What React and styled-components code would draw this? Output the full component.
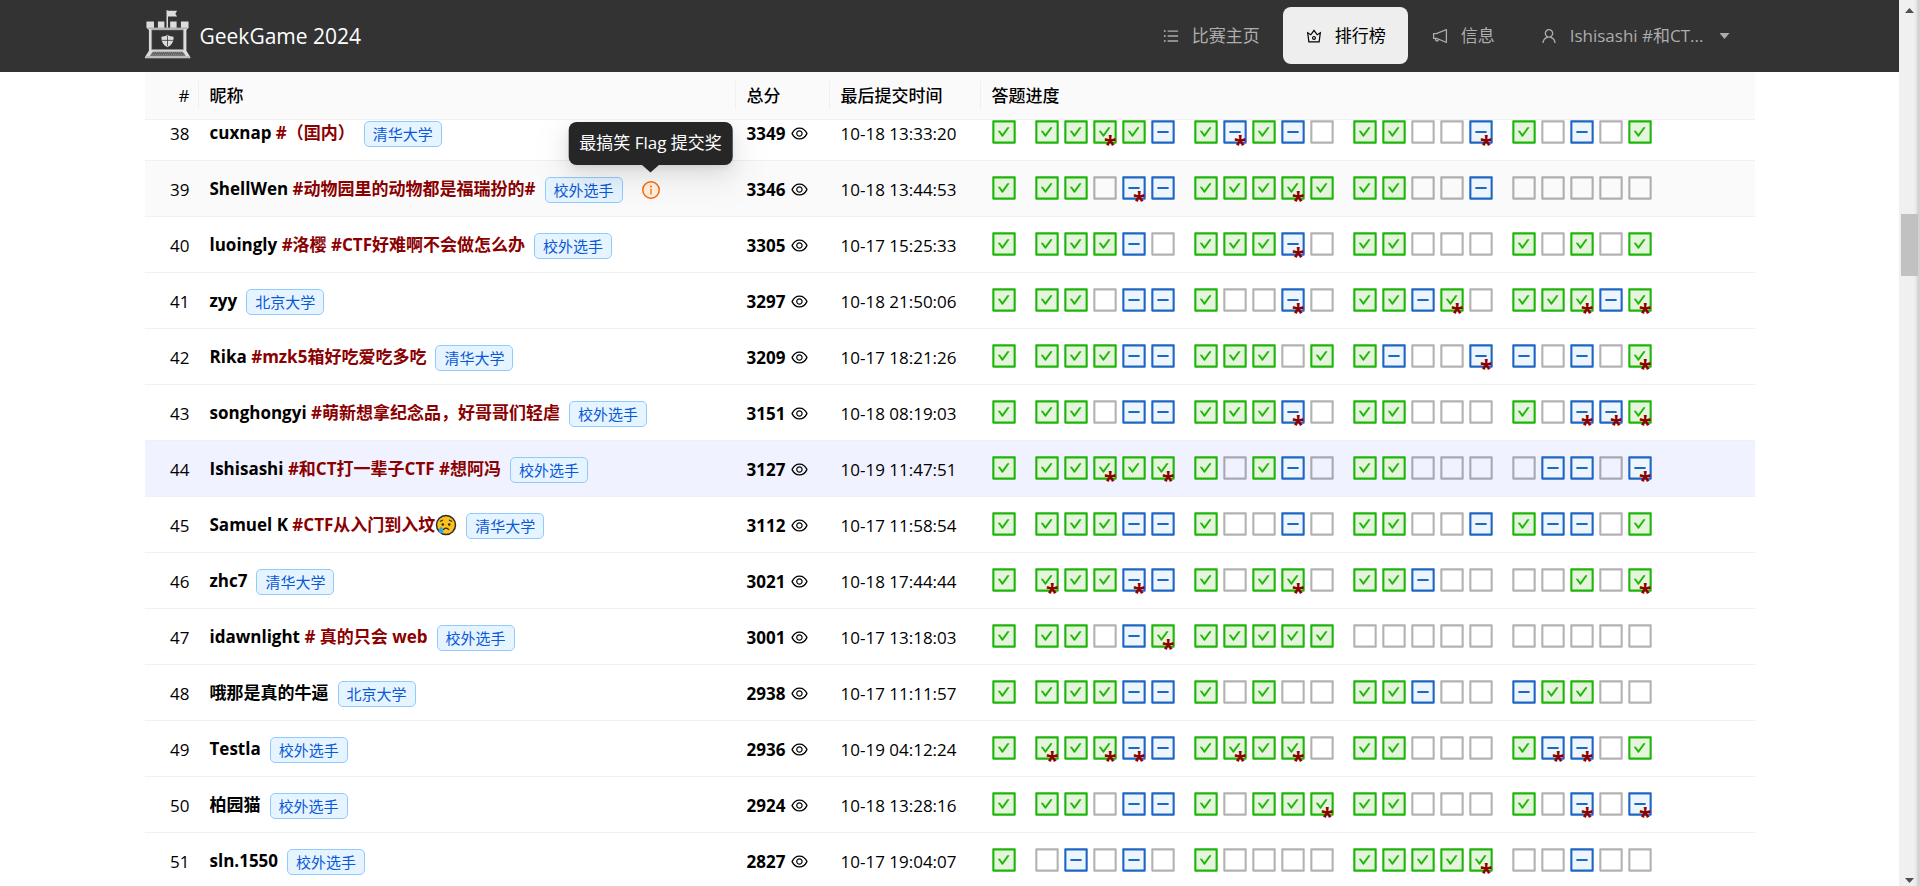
import React, { useLayoutEffect, useRef } from "react";
import styled, { createGlobalStyle, css } from "styled-components";
import {
  AiOutlineCrown,
  AiOutlineEye,
  AiOutlineNotification,
  AiOutlineUnorderedList,
  AiOutlineUser,
} from "react-icons/ai";

const GlobalStyle = createGlobalStyle`
  *, *::before, *::after { box-sizing: border-box; }
  body {
    margin: 0;
    background: #fff;
    color: #000;
    font-family: "Open Sans", "Noto Sans CJK SC", sans-serif;
    font-size: 17px;
    line-height: 26px;
  }
`;

const Shell = styled.div`
  display: grid;
  grid-template-columns: minmax(0, 1fr) 21px;
  height: 100vh;
`;

const Scroller = styled.div`
  overflow-x: hidden;
  overflow-y: auto;
  scrollbar-width: none;
`;

const Container = styled.div`
  max-width: 1610px;
  margin: 0 auto;
`;

/* ---------- top bar ---------- */

const TopBar = styled.header`
  position: sticky;
  top: 0;
  z-index: 10;
  background: #333;
`;

const TopBarInner = styled(Container)`
  display: flex;
  align-items: center;
  justify-content: space-between;
  height: 72px;
`;

const Brand = styled.a`
  display: flex;
  align-items: center;
  gap: 9px;
  color: #fff;
  font-size: 21px;
  text-decoration: none;
`;

const Logo = styled.svg`
  display: block;
  width: 46px;
  height: 49px;
  margin-bottom: 4px;
`;

const Nav = styled.nav`
  display: flex;
  gap: 1px;
  padding: 0 3px 2px 0;
`;

const navItem = css`
  display: flex;
  align-items: center;
  gap: 12px;
  height: 57px;
  padding: 2px 22px 0;
  border: 0;
  border-radius: 8px;
  background: ${(p) => (p.$active ? "#eee" : "transparent")};
  color: ${(p) => (p.$active ? "#000" : "#adadad")};
  font: inherit;
  text-decoration: none;
  white-space: nowrap;
  cursor: pointer;

  svg {
    width: 18px;
    height: 18px;
  }
`;

const NavLink = styled.a`
  ${navItem}
`;

const AccountButton = styled.button`
  ${navItem}
`;

const Caret = styled.span`
  width: 10px;
  height: 6px;
  margin-left: 4px;
  background: currentColor;
  clip-path: polygon(0 0, 100% 0, 50% 100%);
`;

/* ---------- table ---------- */

const Board = styled.table`
  width: 100%;
  table-layout: fixed;
  border-collapse: separate;
  border-spacing: 0;
`;

const Col = styled.col`
  width: ${(p) => (p.$w ? `${p.$w}px` : "auto")};
`;

const HeadCell = styled.th`
  position: sticky;
  top: 72px;
  z-index: 2;
  height: 48px;
  padding: 0 9px 0 11px;
  border-bottom: 1px solid #f0f0f0;
  background: #fafafa;
  font-weight: 500;
  text-align: ${(p) => p.$align || "left"};

  &:not(:last-child)::after {
    content: "";
    position: absolute;
    top: 9px;
    right: 0;
    width: 1px;
    height: 28px;
    background: #f0f0f0;
  }
`;

const rowTint = { hover: "#fafafa", mine: "#f0f2ff" };

const Row = styled.tr`
  background: ${(p) => rowTint[p.$tint] || "#fff"};
`;

const Cell = styled.td`
  height: 56px;
  padding: 2px 9px 0 11px;
  border-bottom: 1px solid #f0f0f0;
  text-align: ${(p) => p.$align || "left"};
  white-space: nowrap;
`;

const Line = styled.div`
  display: flex;
  align-items: center;
  gap: ${(p) => p.$gap || 0}px;
`;

const Name = styled.span`
  display: flex;
  align-items: center;
  margin-bottom: 2px;
  font-weight: 700;
  white-space: pre;
`;

const Motto = styled.span`
  color: #8b0000;
`;

const Tag = styled.span`
  padding: 0 8px;
  border: 1px solid #91caff;
  border-radius: 5px;
  background: #e6f4ff;
  color: #0958d9;
  font-size: 15px;
  line-height: 24px;
`;

const Emoji = styled.svg`
  width: 22px;
  height: 22px;
`;

const IconButton = styled.button`
  display: flex;
  padding: 0;
  border: 0;
  background: none;
  color: inherit;
  cursor: pointer;

  svg {
    width: ${(p) => p.$size || 18}px;
    height: ${(p) => p.$size || 18}px;
  }
`;

const Badge = styled.span`
  position: relative;
  display: flex;
  margin-left: 10px;
`;

const Tooltip = styled.span`
  position: absolute;
  bottom: calc(100% + 16px);
  left: 50%;
  z-index: 1;
  padding: 8px 11px 9px;
  border-radius: 8px;
  background: #262626;
  color: #fff;
  transform: translateX(-50%);
  box-shadow: 0 8px 20px rgba(0, 0, 0, 0.08), 0 4px 8px -4px rgba(0, 0, 0, 0.12),
    0 11px 35px 10px rgba(0, 0, 0, 0.05);

  &::after {
    content: "";
    position: absolute;
    top: 100%;
    left: calc(50% - 9px);
    width: 18px;
    height: 8px;
    background: #262626;
    clip-path: polygon(0 0, 100% 0, 56% 88%, 50% 100%, 44% 88%);
  }
`;

const Score = styled.strong`
  font-weight: 700;
`;

const Group = styled.span`
  display: flex;
  gap: 5px;
`;

const Tile = styled.span`
  position: relative;
  display: block;
  width: 24px;
  height: 24px;
  margin-bottom: 4px;

  svg {
    display: block;
    width: 100%;
    height: 100%;
  }
`;

const Star = styled.span`
  position: absolute;
  right: 0;
  bottom: -12px;
  color: #900000;
  font-size: 23px;
  font-weight: 700;
  line-height: 24px;
`;

/* ---------- scroll bar ---------- */

const Track = styled.div`
  display: flex;
  flex-direction: column;
  align-items: center;
  justify-content: space-between;
  padding: 8px 0 3px;
  background: linear-gradient(90deg, #f0f0f0 70%, #e4e4e4 84%, #d2d2d2 90%);
`;

const TrackArrow = styled.span`
  width: 9px;
  height: 5px;
  background: #505050;
  clip-path: ${(p) =>
    p.$down ? "polygon(0 0, 100% 0, 50% 100%)" : "polygon(50% 0, 100% 100%, 0 100%)"};
`;

const TrackLane = styled.div`
  display: flex;
  flex-direction: column;
  flex: 1;
  width: 17px;

  &::before {
    content: "";
    flex: 201 1 0;
  }

  &::after {
    content: "";
    flex: 602 1 0;
  }
`;

const Thumb = styled.span`
  flex: 62 1 0;
  background: #c1c1c1;
`;

/* ---------- drawings ---------- */

function CastleLogo() {
  return (
    <Logo viewBox="0 0 47 50" aria-hidden="true">
      <path
        fill="#dcdcdc"
        fillRule="evenodd"
        d="M22 0h1v.7h9.8L31 3.7l1.8 3H23.500V18h2.200v-6.300h6.600V18h4.400v-6.300h7.800V18L42.300 20.500V41.500L46.300 48v1.300H0V48L4 41.500V20.500L1.500 18v-6.300h7.700V18h4v-6.300h6.600V18H22zM7 20.500v19.800h32V20.500z"
      />
      <path
        fill="none"
        stroke="#8c8c8c"
        strokeWidth=".8"
        d="M3 18.500H43M6.800 20.200H39.200V40.500H6.800zM1 48H45.500"
      />
      <path
        fill="#dcdcdc"
        d="M23 25.300c2 1.600 4 2 6.200 2 0 5-1.700 8.700-6.200 10.600-4.500-1.900-6.200-5.600-6.200-10.600 2.200 0 4.200-.4 6.200-2z"
      />
      <path stroke="#333" strokeWidth=".8" d="M23 26v11M17.500 31h11" />
      <path fill="#555" d="M8 42.500H38.500L41.500 46.800H5z" />
      <path
        stroke="#c8c8c8"
        strokeWidth=".7"
        strokeDasharray="1 1"
        d="M7.500 43.700H39M6.500 45.200H40.500"
      />
    </Logo>
  );
}

const FRAME =
  "M880 112H144c-17.7 0-32 14.3-32 32v736c0 17.7 14.3 32 32 32h736c17.7 0 32-14.3 32-32V144c0-17.7-14.3-32-32-32zm-40 728H184V184h656v656z";
const CHECK =
  "M432.2 657.7a31.8 31.8 0 0051.7 0l210.6-292c3.8-5.3 0-12.7-6.5-12.7h-46.9c-10.3 0-19.9 5-25.9 13.3L458 584.3l-71.2-98.8c-6-8.4-15.7-13.3-25.9-13.3H314c-6.5 0-10.3 7.4-6.5 12.7l124.700 172.800z";
const MINUS =
  "M328 544h368c4.400 0 8-3.600 8-8v-48c0-4.400-3.600-8-8-8H328c-4.400 0-8 3.600-8 8v48c0 4.400 3.600 8 8 8z";

const STATES = {
  c: { label: "已完成", line: "#1eb50a", fill: "#e4f5dc", mark: CHECK },
  m: { label: "部分完成", line: "#1f66c4", fill: "#edf5fd", mark: MINUS },
  ".": { label: "未完成", line: "rgba(0,0,0,.3)", fill: "none", mark: "" },
};

function Progress({ code }) {
  const state = STATES[code.toLowerCase()];
  const starred = code === "C" || code === "M";
  return (
    <Tile>
      <svg viewBox="102 102 820 820" role="img" aria-label={state.label}>
        <path fill={state.fill} d="M150 150h724v724H150z" />
        <path fill={state.line} d={FRAME + state.mark} />
      </svg>
      {starred && <Star>*</Star>}
    </Tile>
  );
}

function InfoIcon() {
  return (
    <svg viewBox="64 64 896 896" aria-hidden="true">
      <circle cx="512" cy="512" r="410" fill="#fff0e0" stroke="#fa6a0a" strokeWidth="76" />
      <path
        fill="#fa6a0a"
        d="M464 336a48 48 0 1096 0 48 48 0 10-96 0zm72 112h-48c-4.400 0-8 3.600-8 8v272c0 4.400 3.600 8 8 8h48c4.400 0 8-3.600 8-8V456c0-4.400-3.600-8-8-8z"
      />
    </svg>
  );
}

function CryingFace() {
  return (
    <Emoji viewBox="0 0 22 22" role="img" aria-label="哭泣">
      <circle cx="11" cy="11" r="9.500" fill="#fcc21b" stroke="#2b2b2b" strokeWidth="1.500" />
      <path fill="none" stroke="#2b2b2b" strokeWidth="1.200" d="M5 7.500l3-1.500M17 7.500l-3-1.500M8 16c1.500-2.500 4.500-2.500 6 0" />
      <circle cx="7.800" cy="10.500" r="1.300" fill="#2b2b2b" />
      <circle cx="14.200" cy="10.500" r="1.300" fill="#2b2b2b" />
      <path fill="#2aa5e8" d="M6 12.500c1.500 2 2.300 3.200 2.300 4.500a2.300 2.300 0 01-4.600 0c0-1.300.8-2.500 2.300-4.500z" />
    </Emoji>
  );
}

/* ---------- data ---------- */

const THU = "清华大学";
const PKU = "北京大学";
const OUT = "校外选手";

const PLAYERS = [
  [38, "cuxnap", "#（囯内）", THU, 3349, "10-18 13:33:20", "c ccCcm cMcm. cc..M c.m.c"],
  [39, "ShellWen", "#动物园里的动物都是福瑞扮的#", OUT, 3346, "10-18 13:44:53", "c cc.Mm cccCc cc..m ....."],
  [40, "luoingly", "#洛樱 #CTF好难啊不会做怎么办", OUT, 3305, "10-17 15:25:33", "c cccm. cccM. cc... c.c.c"],
  [41, "zyy", "", PKU, 3297, "10-18 21:50:06", "c cc.mm c..M. ccmC. ccCmC"],
  [42, "Rika", "#mzk5箱好吃爱吃多吃", THU, 3209, "10-17 18:21:26", "c cccmm ccc.c cm..M m.m.C"],
  [43, "songhongyi", "#萌新想拿纪念品，好哥哥们轻虐", OUT, 3151, "10-18 08:19:03", "c cc.mm cccM. cc... c.MMC"],
  [44, "Ishisashi", "#和CT打一辈子CTF #想阿冯", OUT, 3127, "10-19 11:47:51", "c ccCcC c.cm. cc... .mm.M"],
  [45, "Samuel K", "#CTF从入门到入坟", THU, 3112, "10-17 11:58:54", "c cccmm c..m. cc..m cmm.c"],
  [46, "zhc7", "", THU, 3021, "10-18 17:44:44", "c CccMm c.cC. ccm.. ..c.C"],
  [47, "idawnlight", "# 真的只会 web", OUT, 3001, "10-17 13:18:03", "c cc.mC ccccc ..... ....."],
  [48, "哦那是真的牛逼", "", PKU, 2938, "10-17 11:11:57", "c cccmm c.c.. ccm.. mcc.."],
  [49, "Testla", "", OUT, 2936, "10-19 04:12:24", "c CcCMm cCcC. cc... cMM.c"],
  [50, "柏园猫", "", OUT, 2924, "10-18 13:28:16", "c cc.mm c.ccC cc... c.M.M"],
  [51, "sln.1550", "", OUT, 2827, "10-17 19:04:07", "c .m.m. c.... ccccC ..m.."],
];

const TINTS = { 39: "hover", 44: "mine" };
const AWARDS = { 39: "最搞笑 Flag 提交奖" };

function PlayerRow({ player }) {
  const [rank, name, motto, school, score, time, progress] = player;
  return (
    <Row $tint={TINTS[rank]}>
      <Cell $align="right">{rank}</Cell>
      <Cell>
        <Line $gap={9}>
          <Name>
            {name}
            {motto && <Motto>{" " + motto}</Motto>}
            {rank === 45 && <CryingFace />}
          </Name>
          <Tag>{school}</Tag>
          {AWARDS[rank] && (
            <Badge>
              <IconButton type="button" aria-label="奖项" aria-describedby="award">
                <InfoIcon />
              </IconButton>
              <Tooltip role="tooltip" id="award">
                {AWARDS[rank]}
              </Tooltip>
            </Badge>
          )}
        </Line>
      </Cell>
      <Cell>
        <Line $gap={5}>
          <Score>{score}</Score>
          <IconButton type="button" aria-label="查看" $size={19}>
            <AiOutlineEye />
          </IconButton>
        </Line>
      </Cell>
      <Cell>{time}</Cell>
      <Cell>
        <Line $gap={19}>
          {progress.split(" ").map((group, g) => (
            <Group key={g}>
              {[...group].map((code, i) => (
                <Progress key={i} code={code} />
              ))}
            </Group>
          ))}
        </Line>
      </Cell>
    </Row>
  );
}

export default function App() {
  const scroller = useRef(null);

  useLayoutEffect(() => {
    scroller.current.scrollTop = 15;
  }, []);

  return (
    <>
      <GlobalStyle />
      <Shell>
        <Scroller ref={scroller}>
          <TopBar>
            <TopBarInner>
              <Brand href="#home">
                <CastleLogo />
                GeekGame 2024
              </Brand>
              <Nav>
                <NavLink href="#game">
                  <AiOutlineUnorderedList />
                  比赛主页
                </NavLink>
                <NavLink href="#board" $active aria-current="page">
                  <AiOutlineCrown />
                  排行榜
                </NavLink>
                <NavLink href="#info">
                  <AiOutlineNotification />
                  信息
                </NavLink>
                <AccountButton type="button" aria-haspopup="menu">
                  <AiOutlineUser />
                  Ishisashi #和CT...
                  <Caret />
                </AccountButton>
              </Nav>
            </TopBarInner>
          </TopBar>
          <Container as="main">
            <Board>
              <colgroup>
                <Col $w={54} />
                <Col />
                <Col $w={94} />
                <Col $w={151} />
                <Col $w={774} />
              </colgroup>
              <thead>
                <tr>
                  <HeadCell $align="right">#</HeadCell>
                  <HeadCell>昵称</HeadCell>
                  <HeadCell>总分</HeadCell>
                  <HeadCell>最后提交时间</HeadCell>
                  <HeadCell>答题进度</HeadCell>
                </tr>
              </thead>
              <tbody>
                {PLAYERS.map((player) => (
                  <PlayerRow key={player[0]} player={player} />
                ))}
              </tbody>
            </Board>
          </Container>
        </Scroller>
        <Track aria-hidden="true">
          <TrackArrow />
          <TrackLane>
            <Thumb />
          </TrackLane>
          <TrackArrow $down />
        </Track>
      </Shell>
    </>
  );
}
